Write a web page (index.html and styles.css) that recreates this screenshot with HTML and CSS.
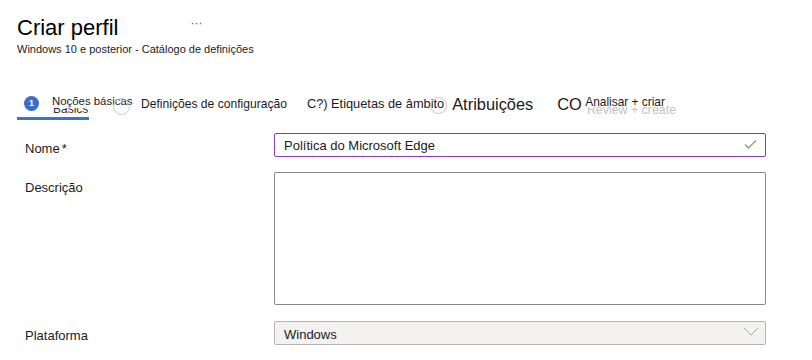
FILE: index.html
```html
<!DOCTYPE html>
<html lang="pt">
<head>
<meta charset="utf-8">
<title>Criar perfil</title>
<link rel="stylesheet" href="styles.css">
</head>
<body>
<header class="head">
  <div class="title-row">
    <h1 class="title">Criar perfil</h1>
    <span class="more">···</span>
  </div>
  <div class="subtitle">Windows 10 e posterior - Catálogo de definições</div>
</header>

<nav class="tabs">
  <div class="tab tab-active">
    <span class="step step-filled">1</span>
    <span class="ghost-dark">Basics</span>
    <span class="overlay-label label-1">Noções básicas</span>
  </div>
  <div class="tab tab-2">
    <span class="step step-ring"></span>
    <span class="tab-label">Definições de configuração</span>
  </div>
  <div class="tab tab-3">
    <span class="tab-label">C?) Etiquetas de âmbito</span>
    <span class="step step-ring ring-over"></span>
  </div>
  <div class="tab tab-4">
    <span class="tab-big">Atribuições</span>
  </div>
  <div class="tab tab-5">
    <span class="tab-big">CO</span>
    <span class="ghost-light">Review + create</span>
    <span class="overlay-label label-5">Analisar + criar</span>
  </div>
</nav>

<main class="form">
  <div class="row">
    <label class="label">Nome<span class="req">*</span></label>
    <div class="input input-valid">
      <span>Política do Microsoft Edge</span>
      <svg class="check" width="13" height="10" viewBox="0 0 13 10"><path d="M1 5.5 L4.5 9 L12 1.5" fill="none" stroke="#6aa84f" stroke-width="1.2"/></svg>
    </div>
  </div>
  <div class="row row-desc">
    <label class="label">Descrição</label>
    <div class="textarea"></div>
  </div>
  <div class="row row-plat">
    <label class="label">Plataforma</label>
    <div class="select">
      <span>Windows</span>
      <svg class="chev" width="16" height="9" viewBox="0 0 16 9"><path d="M1 1 L8 8 L15 1" fill="none" stroke="#a8a8a8" stroke-width="1"/></svg>
    </div>
  </div>
</main>
</body>
</html>
```

FILE: styles.css
```css
* { box-sizing: border-box; }
html, body { margin: 0; padding: 0; background: #fff; }
body {
  font-family: "Liberation Sans", Arial, sans-serif;
  color: #1b1b1b;
  font-size: 13px;
  width: 812px;
  height: 360px;
  overflow: hidden;
}
.head { padding: 14px 0 0 17px; }
.title-row { display: flex; align-items: flex-start; }
.title {
  margin: 0;
  font-size: 22px;
  font-weight: 400;
  line-height: 28px;
  color: #000;
}
.more {
  margin-left: 72px;
  margin-top: 2px;
  font-size: 12px;
  color: #555;
}
.subtitle {
  font-size: 11px;
  line-height: 14px;
  color: #1b1b1b;
}
.tabs {
  display: flex;
  align-items: flex-start;
  margin-top: 34px;
  height: 43px;
  padding-left: 17px;
}
.tab {
  position: relative;
  display: flex;
  align-items: center;
  height: 30px;
}
.tab-active {
  width: 72px;
  padding-left: 7px;
  border-bottom: 3px solid #3a74c9;
}
.step {
  display: inline-block;
  width: 15px;
  height: 15px;
  border-radius: 50%;
  flex: none;
}
.step-filled {
  background: #3a70c4;
  color: #fff;
  font-size: 9px;
  font-weight: 700;
  line-height: 15px;
  text-align: center;
}
.step-ring {
  width: 17px;
  height: 17px;
  border: 1.5px solid #c8c8c8;
  background: transparent;
}
.ghost-dark {
  margin-left: 14px;
  margin-top: 10px;
  color: #3a2f2f;
  font-size: 12px;
}
.overlay-label {
  position: absolute;
  white-space: nowrap;
  background: rgba(255,255,255,0.92);
  line-height: 16px;
  height: 15px;
  color: #1b1b1b;
}
.label-1 { left: 35px; top: 3px; font-size: 11.4px; }
.tab-2 { margin-left: 24px; }
.tab-2 .step-ring { margin-top: 2px; }
.tab-label { margin-left: 11px; white-space: nowrap; }
.tab-2 .tab-label { margin-top: -3px; font-size: 12.1px; }
.tab-3 { margin-left: 20px; }
.tab-3 .tab-label { margin-left: 0; margin-top: -3px; font-size: 12.8px; }
.ring-over { margin-left: -14px; }
.tab-4 { margin-left: 5px; }
.tab-big { font-size: 16.4px; color: #1b1b1b; margin-top: -1px; white-space: nowrap; }
.tab-5 { margin-left: 24px; }
.ghost-light {
  margin-left: 5px;
  margin-top: 9px;
  color: #c2c2c2;
  font-size: 12.4px;
  white-space: nowrap;
}
.label-5 { left: 28px; top: 4px; font-size: 11.9px; background: rgba(255,255,255,0.88); height: 13px; }
.form { padding-left: 25px; padding-right: 46px; }
.row {
  display: grid;
  grid-template-columns: 249px 1fr;
  align-items: start;
}
.label { line-height: 24px; padding-top: 4px; }
.req { margin-left: 2px; }
.input {
  height: 24px;
  border: 1px solid #8540b0;
  border-radius: 2px;
  display: flex;
  align-items: center;
  justify-content: space-between;
  padding: 0 8px 0 9px;
}
.check { margin-top: -3px; }
.row-desc { margin-top: 11px; }
.textarea {
  height: 133px;
  border: 1px solid #8a8a8a;
  border-radius: 2px;
}
.row-plat { margin-top: 16px; }
.row-plat .label { padding-top: 3px; }
.select {
  height: 24px;
  background: #f3f2f1;
  border: 1px solid #b4b4b4;
  border-radius: 2px;
  display: flex;
  align-items: center;
  justify-content: space-between;
  padding: 2px 6px 0 9px;
}
.chev { margin-top: -6px; }
```
